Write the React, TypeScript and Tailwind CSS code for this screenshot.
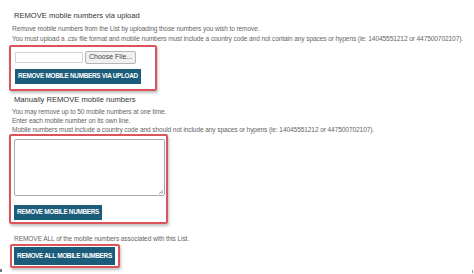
import React from 'react';

const font = { fontFamily: '"Liberation Sans", Arial, sans-serif' };

// Red highlight frame used around each control group in the screenshot
const Callout: React.FC<{ className?: string; children: React.ReactNode }> = ({ className = '', children }) => (
  <div className={`border-2 border-[#d9555a] rounded-[2px] shadow-[1px_2px_3px_rgba(0,0,0,0.25)] ${className}`}>
    {children}
  </div>
);

const ActionButton: React.FC<{ label: string; className?: string }> = ({ label, className = '' }) => (
  <button
    className={`flex items-center justify-center whitespace-nowrap bg-[#1b5c7a] text-white font-bold text-[6.4px] tracking-[-0.3px] leading-none uppercase ${className}`}
  >
    {label}
  </button>
);

export default function App() {
  return (
    <div className="w-[474px] h-[274px] bg-white text-[#666] overflow-hidden relative" style={font}>
      {/* Upload section */}
      <div className="pt-[11px] pl-[12px]">
        <p className="ml-[2px] text-[7.6px] leading-[10px] text-[#333]">REMOVE mobile numbers via upload</p>
        <div className="mt-[3px] text-[6.6px] leading-[10px] tracking-[-0.11px] whitespace-nowrap">
          <p>Remove mobile numbers from the List by uploading those numbers you wish to remove.</p>
          <p>You must upload a .csv file format and mobile numbers must include a country code and not contain any spaces or hypens (ie: 14045551212 or 447500702107).</p>
        </div>
      </div>

      <Callout className="ml-[9px] mt-[1px] w-[148px] h-[46px] pl-[4px] pt-[4px]">
        <div className="flex items-center gap-[2px]">
          <div className="w-[68px] h-[11px] border border-[#d4d4d4] bg-white" />
          <div className="h-[13px] px-[3px] border border-[#b5b5b5] rounded-[2px] bg-[#f0f0f0] text-[7px] text-[#444] flex items-center">
            Choose File...
          </div>
        </div>
        <ActionButton label="REMOVE MOBILE NUMBERS VIA UPLOAD" className="mt-[5px] h-[15px] w-[126px]" />
      </Callout>

      {/* Manual section */}
      <div className="pl-[12px] pt-[4px]">
        <p className="ml-[2px] text-[7.6px] leading-[10px] text-[#333]">Manually REMOVE mobile numbers</p>
        <div className="mt-[2px] text-[6.6px] leading-[9px] tracking-[-0.11px] whitespace-nowrap">
          <p>You may remove up to 50 mobile numbers at one time.</p>
          <p>Enter each mobile number on its own line.</p>
          <p>Mobile numbers must include a country code and should not include any spaces or hypens (ie: 14045551212 or 447500702107).</p>
        </div>
      </div>

      <Callout className="ml-[9px] w-[159px] h-[90px] pl-[3px] pt-[3px]">
        <div className="w-[151px] h-[57px] border border-[#a9a9a9] rounded-[2px] bg-white relative">
          <svg className="absolute right-[1px] bottom-[1px]" width="5" height="5" viewBox="0 0 5 5">
            <path d="M5 1 L1 5 M5 3 L3 5" stroke="#888" strokeWidth="0.8" />
          </svg>
        </div>
        <ActionButton label="REMOVE MOBILE NUMBERS" className="mt-[9px] h-[15px] w-[88px]" />
      </Callout>

      {/* Remove all section */}
      <p className="ml-[14px] mt-[10px] text-[6.6px] leading-[9px] tracking-[-0.11px]">
        REMOVE ALL of the mobile numbers associated with this List.
      </p>
      <Callout className="ml-[10px] mt-[1px] w-[110px] h-[24px] pl-[2px] pt-[1px]">
        <ActionButton label="REMOVE ALL MOBILE NUMBERS" className="h-[18px] w-[101px]" />
      </Callout>

      <div className="absolute left-0 bottom-[2px] w-[2px] h-[3px] bg-[#777]" />
      <div className="absolute right-[1px] bottom-[1px] w-[1px] h-[3px] bg-[#999]" />
    </div>
  );
}
